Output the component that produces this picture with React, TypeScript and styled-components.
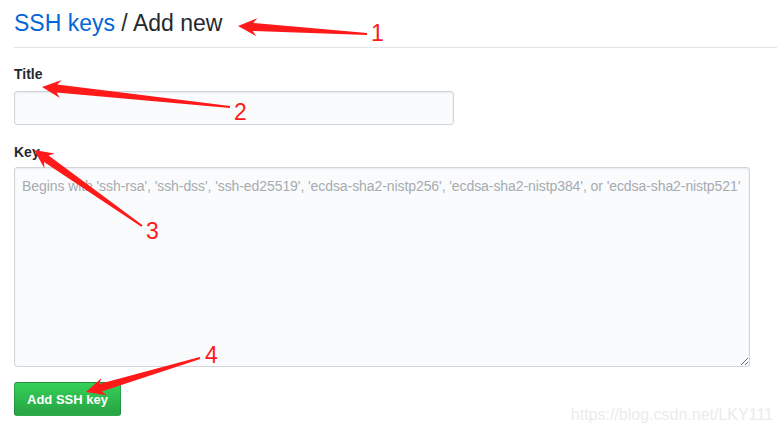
import styled, { createGlobalStyle } from "styled-components"

const GlobalStyle = createGlobalStyle`
  html, body {
    margin: 0;
    padding: 0;
    background: #fff;
  }
  body {
    font-family: "Liberation Sans", Arial, sans-serif;
    color: #24292e;
  }
`

const Page = styled.div`
  position: relative;
  width: 780px;
  height: 430px;
  overflow: hidden;
  padding: 0 3px 0 14px;
  box-sizing: border-box;
`

const Header = styled.h2`
  margin: 0;
  padding: 8px 0 9px;
  font-size: 23px;
  font-weight: 400;
  line-height: 30px;
  border-bottom: 1px solid #e1e4e8;
  color: #24292e;
`

const Crumb = styled.a`
  color: #0366d6;
  text-decoration: none;
`

const Form = styled.form`
  display: flex;
  flex-direction: column;
  padding-top: 16px;
`

const Group = styled.div`
  display: flex;
  flex-direction: column;
  align-items: flex-start;
  margin-bottom: ${(p: { $gap: number }) => p.$gap}px;
`

const Label = styled.label`
  font-size: 14px;
  font-weight: 700;
  line-height: 20px;
  margin-bottom: ${(p: { $gap: number }) => p.$gap}px;
`

const fieldBase = `
  box-sizing: border-box;
  background: #fafbfc;
  border: 1px solid #d1d5da;
  border-radius: 3px;
  box-shadow: inset 0 1px 2px rgba(27, 31, 35, 0.075);
  font-family: "Liberation Sans", Arial, sans-serif;
  outline: none;
`

const TextInput = styled.input`
  ${fieldBase}
  width: 440px;
  height: 34px;
  padding: 6px 8px;
  font-size: 14px;
`

const KeyArea = styled.textarea`
  ${fieldBase}
  width: 736px;
  height: 200px;
  padding: 8px 7px;
  font-size: 14px;
  line-height: 20px;
  letter-spacing: -0.08px;
  resize: both;
  &::placeholder {
    color: #a6abb0;
  }
`

const SubmitButton = styled.button`
  width: 107px;
  height: 34px;
  padding: 0;
  border: 1px solid rgba(27, 31, 35, 0.2);
  border-radius: 3px;
  background-image: linear-gradient(-180deg, #34d058 0%, #28a745 90%);
  color: #fff;
  font-family: "Liberation Sans", Arial, sans-serif;
  font-size: 13px;
  font-weight: 700;
  cursor: pointer;
`

const Watermark = styled.div`
  position: absolute;
  right: 7px;
  bottom: 6px;
  font-size: 16px;
  color: #ececec;
`

const Overlay = styled.svg`
  position: absolute;
  left: 0;
  top: 0;
  pointer-events: none;
`

const Marker = styled.text`
  font-family: "Liberation Sans", Arial, sans-serif;
  font-size: 23px;
  fill: #ff1a1a;
`

type Pt = [number, number]

// tapered screenshot-tool style arrow, tip -> tail
const arrowPoints = (tip: Pt, tail: Pt) => {
  const dx = tail[0] - tip[0]
  const dy = tail[1] - tip[1]
  const len = Math.hypot(dx, dy)
  const ux = dx / len
  const uy = dy / len
  const nx = -uy
  const ny = ux
  const at = (along: number, side: number): string =>
    `${(tip[0] + ux * along + nx * side).toFixed(1)},${(tip[1] + uy * along + ny * side).toFixed(1)}`
  return [
    at(0, 0),
    at(19, 9),
    at(15, 4),
    at(len, 1),
    at(len, -1),
    at(15, -4),
    at(19, -9),
  ].join(" ")
}

const annotations: { tip: Pt; tail: Pt; label: string; at: Pt }[] = [
  { tip: [238, 26], tail: [367, 34], label: "1", at: [371, 41] },
  { tip: [42, 87], tail: [230, 107], label: "2", at: [234, 120] },
  { tip: [34, 150], tail: [142, 226], label: "3", at: [146, 239] },
  { tip: [86, 392], tail: [200, 358], label: "4", at: [205, 363] },
]

export default function App() {
  return (
    <Page>
      <GlobalStyle />
      <Header>
        <Crumb href="#">SSH keys</Crumb> / Add new
      </Header>
      <Form onSubmit={(e) => e.preventDefault()}>
        <Group $gap={17}>
          <Label htmlFor="ssh-title" $gap={7}>Title</Label>
          <TextInput id="ssh-title" type="text" />
        </Group>
        <Group $gap={15}>
          <Label htmlFor="ssh-key" $gap={5}>Key</Label>
          <KeyArea
            id="ssh-key"
            placeholder="Begins with 'ssh-rsa', 'ssh-dss', 'ssh-ed25519', 'ecdsa-sha2-nistp256', 'ecdsa-sha2-nistp384', or 'ecdsa-sha2-nistp521'"
          />
        </Group>
        <div>
          <SubmitButton type="submit">Add SSH key</SubmitButton>
        </div>
      </Form>
      <Watermark>https://blog.csdn.net/LKY111</Watermark>
      <Overlay width="780" height="430" viewBox="0 0 780 430">
        {annotations.map((a) => (
          <g key={a.label}>
            <polygon points={arrowPoints(a.tip, a.tail)} fill="#ff1a1a" />
            <Marker x={a.at[0]} y={a.at[1]}>{a.label}</Marker>
          </g>
        ))}
      </Overlay>
    </Page>
  )
}
